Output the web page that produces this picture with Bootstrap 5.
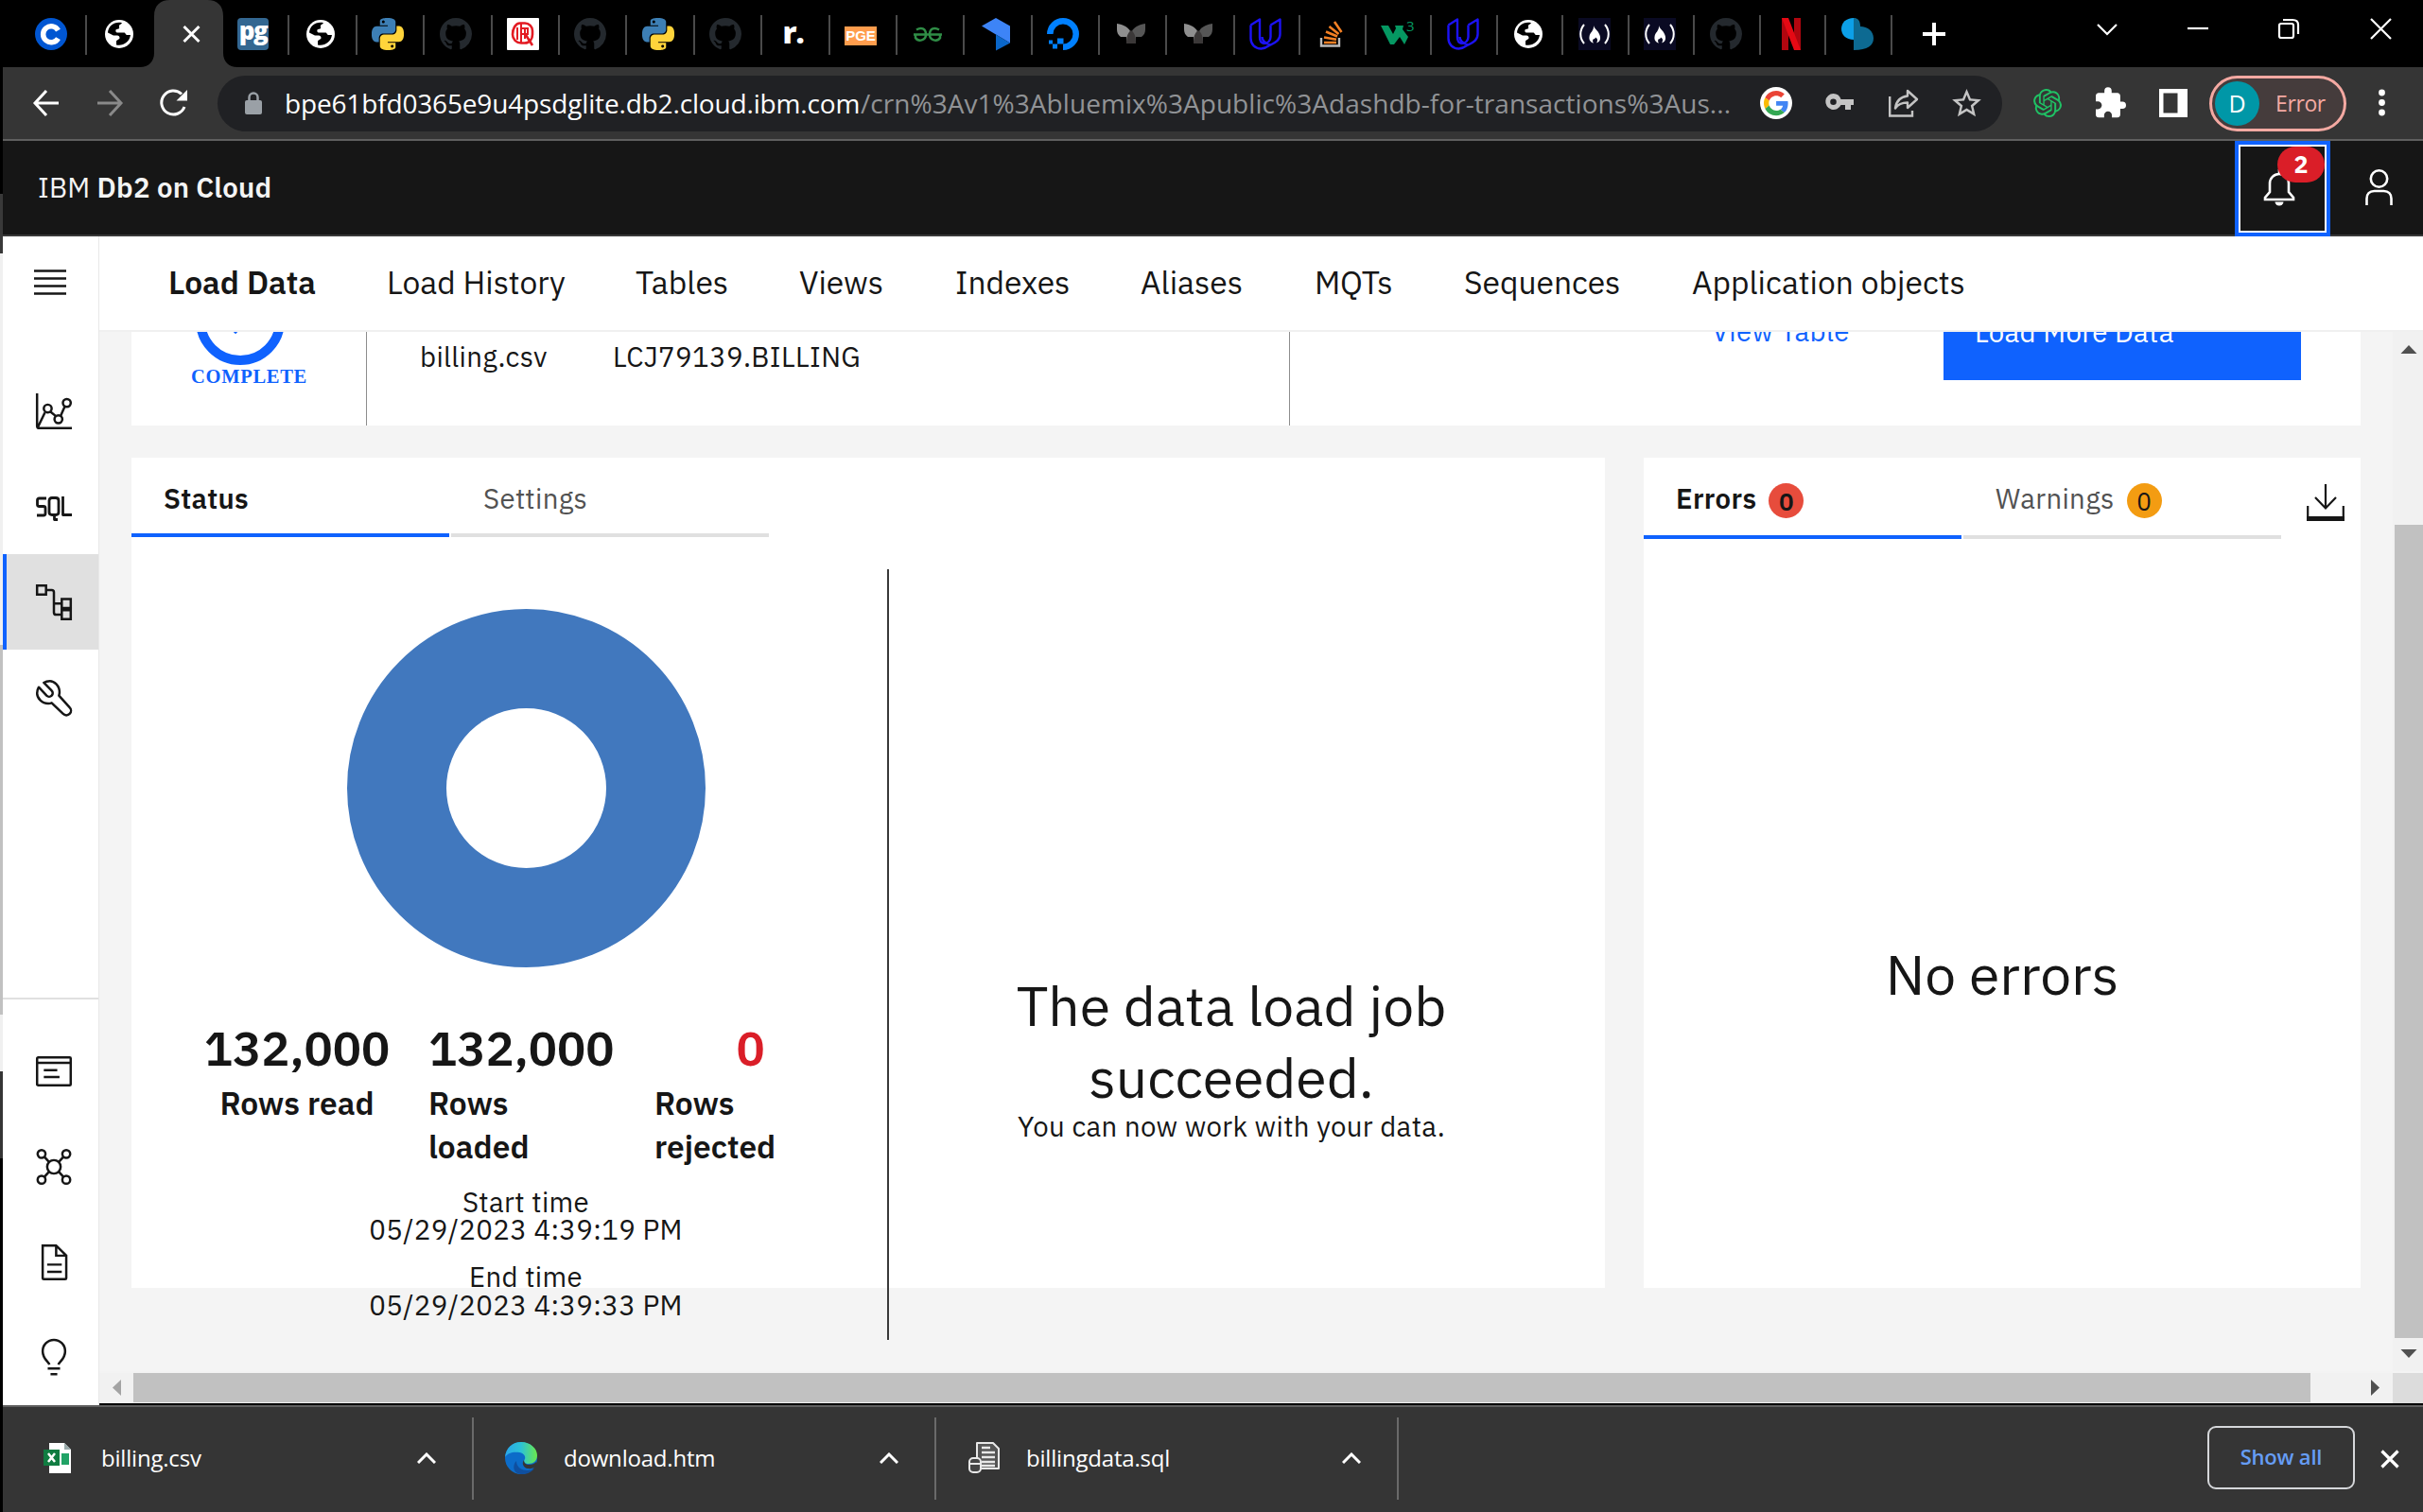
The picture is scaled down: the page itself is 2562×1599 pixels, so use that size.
<!DOCTYPE html>
<html lang="en">
<head>
<meta charset="utf-8">
<title>IBM Db2 on Cloud</title>
<link href="https://cdn.jsdelivr.net/npm/bootstrap@5.3.0/dist/css/bootstrap.min.css" rel="stylesheet">
<style>
html,body{width:2562px;height:1599px;overflow:hidden;margin:0}
body{background:#000;color:#161616;font-family:"IBM Plex Sans",Roboto,"Liberation Sans",sans-serif;line-height:1}
svg{display:block;flex:none;overflow:visible}
.t{white-space:nowrap}
.desk-edge{width:3px;flex:none;background:linear-gradient(#000 0 205px,#393939 205px 268px,#f0f0f0 268px 682px,#c1c1c1 682px 1073px,#f0f0f0 1073px 1133px,#353535 1133px 1225px,#000 1225px)}
.win{width:2559px;flex:none}
.chrome{font-family:"Segoe UI","Open Sans","Noto Sans",sans-serif;color:#fff}
.strip{height:71px;background:#000}
.tb{width:71.4px;height:42px;margin-top:16px;padding-right:4.4px;padding-bottom:2px;border-right:2px solid #4a4a4a;flex:none;display:flex;align-items:center;justify-content:center}
.tb.first{width:89px;padding-left:14px;padding-right:0}
.tb.second{padding-right:4px;padding-left:0;border:0;width:71px}
.tb.tight{width:69.5px;padding-right:2.5px}
.tb-on{width:72px;height:71px;flex:none}
.tb-on .shape{position:absolute;left:-15px;top:0}
.wctl{margin-left:157px;width:346px;padding-top:19px}
.fav-pge{width:34px;height:20px;background:#ff9d4d;font:700 15px/20px "Liberation Sans",sans-serif;text-align:center;margin-top:3px}
.fav-pg{width:33px;height:34px;background:#336791;border-radius:4px;font:800 26px/27px "Open Sans",sans-serif;text-align:center;letter-spacing:-1.5px}
.fav-q{width:34px;height:34px;background:#fff;color:#e31b23;border-radius:1px}
.fav-c{width:34px;height:34px;border-radius:50%;background:#0056d2}
.fav-r{font:800 32px/34px "Open Sans",sans-serif;letter-spacing:-1px;padding-bottom:4px}
.tools{height:78px;background:#353535;border-bottom:2px solid #5f5f5f;padding-left:32px}
.omni{width:1887px;height:59px;border-radius:30px;background:#202124;margin-left:31px;padding-left:29px}
.url{font-size:28px;margin-left:24px;width:1529px;line-height:56px}
.url .host{display:inline-block;width:609px;letter-spacing:-.16px}
.url .path{color:#919396;letter-spacing:.05px}
.chip{width:145px;height:59px;border:3px solid #f4a9a2;border-radius:30px;background:#453c3c;color:#f4a9a2;padding-left:3px}
.chip .err{font-size:23px;letter-spacing:-.4px;margin-left:17px}
.ava{width:47px;height:47px;border-radius:50%;background:#0097a7;font-size:25px;color:#fff;line-height:47px;text-align:center}
.ibm{height:101px;background:#161616;border-bottom:2px solid #393939;color:#f4f4f4;font-size:29.4px;padding-left:37px;letter-spacing:.21px}
.ibm b,.topnav b{font-weight:600}
.bell{width:101px;height:101px;border:4px solid #0f62fe;box-shadow:inset 0 0 0 2px #fff;margin-bottom:-2px;background:#161616}
.bell .cnt{position:absolute;left:41px;top:2px;width:50px;height:38px;border-radius:19px;background:#da1e28;color:#fff;font-size:25px;font-weight:700;line-height:38px;text-align:center;letter-spacing:0}
.side{width:102px;border-right:1px solid #e8e8e8;background:#fff;flex:none}
.sd{height:101px;flex:none;display:flex;align-items:center;padding-left:35px;width:101px}
.sd.on{background:#e0e0e0;border-left:4px solid #0f62fe;padding-left:31px}
.sd svg{fill:none;stroke:#161616;stroke-width:2.1}
.topnav{height:101px;background:#fff;border-bottom:2px solid #f0f0f0;font-size:33.6px;padding-left:73px;line-height:97px}
.topnav span{flex:none;margin-right:76px}
.topnav span:nth-child(1){width:153px;margin-right:78px}
.topnav span:nth-child(2){width:187px}
.topnav span:nth-child(3){width:97px}
.topnav span:nth-child(4){width:89px}
.topnav span:nth-child(5){width:120px}
.topnav span:nth-child(6){width:108px}
.topnav span:nth-child(7){width:82px;letter-spacing:-.3px}
.topnav span:nth-child(8){width:165px}
.view{height:1099px;background:#f4f4f4}
.pane{width:2425px;flex:none;overflow:hidden;padding-left:34px}
.sum{width:2357px;height:199px;margin-top:-100px;background:#fff;margin-bottom:34px;font-size:29.4px;letter-spacing:.34px}
.sum .c1{width:249px;border-right:1px solid #8d8d8d;padding-top:41px}
.sum .c2{width:976px;border-right:1px solid #8d8d8d;padding:112px 0 0 56px;line-height:28px}
.fname{width:204px}
.done{font:700 20.5px/22px "Liberation Serif",serif;color:#0f62fe;margin:1px 0 0 63px;letter-spacing:.71px}
.vt{width:242px;margin-left:446px;margin-right:3px;line-height:99px;color:#0f62fe}
.more{width:378px;height:101px;background:#0f62fe;color:#fff;border-radius:0;border:0;font-size:29.4px;text-align:left;padding:0 0 0 33px;line-height:101px;letter-spacing:.34px}
.lc{width:1558px;height:878px;background:#fff}
.rc{width:758px;height:878px;background:#fff}
.tabx{width:336px;font-size:29.4px;line-height:87px;padding-left:34px;height:84px;border-bottom:4px solid #e0e0e0;color:#525252;margin-right:2px;letter-spacing:.34px}
.tabx.on{border-color:#0f62fe;color:#161616;font-weight:600}
.rc .tabx{height:86px}
.num{width:37px;height:37px;border-radius:50%;color:#161616;line-height:38px;text-align:center;font-size:26px;display:inline-block;letter-spacing:0;margin-left:13px;position:relative;top:2px}
.num.er{background:#e74c3c}
.num.wa{background:#f39c12}
.stat{width:768px;height:815px;margin:34px 0 0 33px;border-right:2px solid #393939;padding:42px 0 0 2px}
.stats{margin-top:52px;padding-left:40px}
.stats>div{width:200px}
.big{font-size:50.4px;font-weight:600;line-height:66px;margin-bottom:3px}
.big.rej{color:#da1e28;padding-left:3px}
.lbl{font-size:33.6px;font-weight:600;line-height:46px}
.tm{font-size:29.4px;line-height:29.4px;text-align:center;margin-bottom:20.5px;letter-spacing:.34px}
.msg{padding-top:457px;padding-right:33px;text-align:center;flex:1}
.h{font-size:58.8px;line-height:76px}
.none{padding-top:422px}
.sub{font-size:29.4px;line-height:29px;letter-spacing:.34px}
.vb{width:32px;background:#f1f1f1}
.vb .th{background:#c1c1c1;height:860px;margin:0 0 0 2px}
.hb{height:34px;background:#f1f1f1;border-top:2px solid #f3f3f3}
.hb .th{background:#c1c1c1;width:2302px;height:31px}
.dl{height:114px;background:#353535;border-top:2px solid #5f5f5f;font-size:24px;letter-spacing:-.2px;padding-bottom:2px}
.di{height:87px;border-right:2px solid #6a6a6a;padding-bottom:2px}
.all{width:156px;height:67px;border:2px solid #d5d7da;border-radius:9px;color:#669df6;font-size:22px;font-weight:600;line-height:60px;text-align:center;padding:0;margin-bottom:2px}
</style>
</head>
<body class="d-flex">
<svg width="0" height="0" style="position:absolute">
<defs>
<symbol id="gh" viewBox="0 0 16 16"><path fill="#24292e" d="M8 0C3.58 0 0 3.58 0 8c0 3.54 2.29 6.53 5.47 7.59.4.07.55-.17.55-.38 0-.19-.01-.82-.01-1.49-2.01.37-2.53-.49-2.69-.94-.09-.23-.48-.94-.82-1.13-.28-.15-.68-.52-.01-.53.63-.01 1.08.58 1.23.82.72 1.21 1.87.87 2.33.66.07-.52.28-.87.51-1.07-1.78-.2-3.64-.89-3.64-3.95 0-.87.31-1.59.82-2.15-.08-.2-.36-1.02.08-2.12 0 0 .67-.21 2.2.82.64-.18 1.32-.27 2-.27.68 0 1.36.09 2 .27 1.53-1.04 2.2-.82 2.2-.82.44 1.1.16 1.92.08 2.12.51.56.82 1.27.82 2.15 0 3.07-1.87 3.75-3.65 3.95.29.25.54.73.54 1.48 0 1.07-.01 1.93-.01 2.2 0 .21.15.46.55.38A8.012 8.012 0 0 0 16 8c0-4.42-3.58-8-8-8z"/></symbol>
<symbol id="globe" viewBox="0 0 30 30"><circle cx="15" cy="15" r="15" fill="#fff"/><path fill="#000" d="M18 3.2C10 1.500 3.500 6.500 3 13.500L9 16.500h4c1.500 0 2.500 1 2.500 2.500 0 2-3.500 2-3.500 4v3.500c7 1.500 14-3 15-10.500h-3.500c-2 0-1.500-2.500-3.500-2.500h-7c-1.500 0-2-1.500-1.500-3 .5-1.200 3-.5 3.500-1.500.6-1-.5-1.500 0-3 .5-1.300 2-1.300 3-2.800z"/></symbol>
<symbol id="pyh" viewBox="0 0 24 24"><path d="M14.25.18l.9.2.73.26.59.3.45.32.34.34.25.34.16.33.1.3.04.26.02.2-.01.13V8.5l-.05.63-.13.55-.21.46-.26.38-.3.31-.33.25-.35.19-.35.14-.33.1-.3.07-.26.04-.21.02H8.77l-.69.05-.59.14-.5.22-.41.27-.33.32-.27.35-.2.36-.15.37-.1.35-.07.32-.04.27-.02.21v3.06H3.17l-.21-.03-.28-.07-.32-.12-.35-.18-.36-.26-.36-.36-.35-.46-.32-.59-.28-.73-.21-.88-.14-1.05-.05-1.23.06-1.22.16-1.04.24-.87.32-.71.36-.57.4-.44.42-.33.42-.24.4-.16.36-.1.32-.05.24-.01h.16l.06.01h8.16v-.83H6.18l-.01-2.75-.02-.37.05-.34.11-.31.17-.28.25-.26.31-.23.38-.2.44-.18.51-.15.58-.12.64-.1.71-.06.77-.04.84-.02 1.27.05zm-6.3 1.98l-.23.33-.08.41.08.41.23.34.33.22.41.09.41-.09.33-.22.23-.34.08-.41-.08-.41-.23-.33-.33-.22-.41-.09-.41.09z"/></symbol>
<symbol id="py" viewBox="0 0 24 24"><use href="#pyh" fill="#3d7fb5" width="24" height="24"/><use href="#pyh" fill="#ffd43b" width="24" height="24" transform="rotate(180 12 12)"/></symbol>
<symbol id="mm" viewBox="0 0 30 22"><path fill="#8f8f8f" d="M0 0c8 1 13 5 14 8L10 21V14H4C1 12 0 9 0 6z"/><path fill="#565656" d="M30 0c-8 1-13 5-14 8l4 13v-7h6c3-2 4-5 4-8z"/><path fill="#3b3838" d="M15 7c4 3 5 7 5 14H10c0-7 1-11 5-14z"/></symbol>
<symbol id="ud" viewBox="0 0 34 34"><path fill="none" stroke="#1c12f5" stroke-width="2.400" stroke-linejoin="round" d="M1.500 7.500L11 1.500v19c0 4 2 6 4.500 6.500M1.500 7.500v14C1.500 28 6 32.500 12.500 32.500c5 0 7-2.500 10-4.500M22.500 7.500L32.500 1.500V17c0 6-4 8.500-10 11.500C17 27 13.500 25 13.500 20M22.500 7.500V20c0 4-3 7-7 7"/></symbol>
<symbol id="fcc" viewBox="0 0 34 34"><path fill="#0a0a23" d="M0 0h34v34H0z"/><path fill="none" stroke="#fff" stroke-width="2" d="M6 7c-5 6-5 14 0 20M28 7c5 6 5 14 0 20"/><path fill="#fff" d="M16 8c1 4 6 6 7 12 .5 4-1.500 5.500-4 6.500 2-3 1-5-1-6-.5 1.500-1 2-2 1.500-1.500 1.500-1 3.500 0 4.500-3-.8-5-3-4.500-6.500C12 15 16.500 14 16 8z"/></symbol>
<symbol id="up" viewBox="0 0 20 12"><path fill="none" stroke="#fff" stroke-width="3" d="M1 11L10 2l9 9"/></symbol>
</defs>
</svg>
<div class="desk-edge"></div>
<div class="win d-flex flex-column">
<div class="chrome">
<div class="strip d-flex">
<div class="tb first"><div class="fav-c"><svg width="34" height="34"><path d="M24.500 13A8.500 8.500 0 1 0 24.500 21.500" fill="none" stroke="#fff" stroke-width="5.500"/></svg></div></div>
<div class="tb second"><svg width="30" height="30"><use href="#globe"/></svg></div>
<div class="tb-on position-relative"><svg class="shape" width="103" height="71"><path fill="#353535" d="M0 71c9 0 15-6 15-15V17C15 6 21 0 32 0h39c11 0 17 6 17 17v39c0 9 6 15 15 15z"/><path d="M46.500 28l16 16M62.500 28l-16 16" stroke="#fff" stroke-width="3"/></svg></div>
<div class="tb"><div class="fav-pg">pg</div></div>
<div class="tb"><svg width="30" height="30"><use href="#globe"/></svg></div>
<div class="tb"><svg width="34" height="34"><use href="#py"/></svg></div>
<div class="tb"><svg width="34" height="34"><use href="#gh"/></svg></div>
<div class="tb"><div class="fav-q"><svg width="34" height="34" fill="none" stroke="#e31b23"><path stroke-width="2.600" d="M14 5.500h5a8 8 0 0 1 8 8v4c0 5-3 9-8 9h-4c-5 0-9-4-9-9 0-6 3-12 8-12zM20 18l7 11"/><path stroke-width="2" d="M11 10v13M15 6v20M19 10v12M15 11h7v6h-7"/></svg></div></div>
<div class="tb"><svg width="34" height="34"><use href="#gh"/></svg></div>
<div class="tb"><svg width="34" height="34"><use href="#py"/></svg></div>
<div class="tb"><svg width="34" height="34"><use href="#gh"/></svg></div>
<div class="tb"><div class="fav-r">r.</div></div>
<div class="tb"><div class="fav-pge">PGE</div></div>
<div class="tb"><svg width="30" height="15" fill="none" stroke="#2f8d46" stroke-width="2.500"><path d="M0 7.500h30M3 2.500C8-.5 13 1 13 7.500c0 6.500-8 8-11 3.500V7.500M27 2.500C22-.5 17 1 17 7.500c0 6.500 8 8 11 3.500V7.500"/></svg></div>
<div class="tb"><svg width="30" height="34"><path fill="#3d84f7" d="M15 0l15 8.500v18L0 8.500z"/><path fill="#0a66c9" d="M15 17.500l15 9-15 8z"/></svg></div>
<div class="tb"><svg width="34" height="34"><path fill="none" stroke="#0080ff" stroke-width="6.500" d="M3.300 17A13.700 13.700 0 1 1 17 30.700"/><path fill="#0080ff" d="M11 21.500h6.500v6H11zM6 27.500h5v5H6zM2 23.500h4v4H2z"/></svg></div>
<div class="tb"><svg width="30" height="22"><use href="#mm"/></svg></div>
<div class="tb"><svg width="30" height="22"><use href="#mm"/></svg></div>
<div class="tb tight"><svg width="34" height="34"><use href="#ud"/></svg></div>
<div class="tb tight"><svg width="24" height="28" fill="none" stroke="#f48024" stroke-width="2.600"><path stroke="#bcbbbb" stroke-width="2.400" d="M1 18v8.500h19V18"/><path d="M4 23h13M4 17.500l13 2.200M6 11.500l12 5M9.500 6l10 8M15 1l7.500 11"/></svg></div>
<div class="tb tight"><svg width="35" height="28"><path fill="#059862" d="M0 5h8l5 9 3-6-1-3h9l-1 4 6 8-4 8-5-8-6 8h-4z"/><text x="27" y="11" font-size="15" fill="#059862" font-family="Open Sans">3</text></svg></div>
<div class="tb tight"><svg width="34" height="34"><use href="#ud"/></svg></div>
<div class="tb tight"><svg width="30" height="30"><use href="#globe"/></svg></div>
<div class="tb tight"><svg width="34" height="34"><use href="#fcc"/></svg></div>
<div class="tb tight"><svg width="34" height="34"><use href="#fcc"/></svg></div>
<div class="tb tight"><svg width="34" height="34"><use href="#gh"/></svg></div>
<div class="tb tight"><svg width="20" height="34"><path fill="#b1060f" d="M0 0h7v34H0zM13 0h7v34h-7z"/><path fill="#e50914" d="M0 0h7l13 34h-7z"/></svg></div>
<div class="tb tight"><svg width="34" height="34"><path fill="#0ca0e8" d="M13 0v23C5 23 0 18 0 11.500S5 0 13 0z"/><path fill="#0d6a92" d="M13 0c4 0 7 2 7 9 8 0 14 5 14 12.500S28 34 13 34z"/></svg></div>
<svg class="ms-auto mt-3 pt-1" width="28" height="32"><path d="M14 4v24M2 16h24" stroke="#fff" stroke-width="4"/></svg>
<div class="wctl d-flex"><svg width="24" height="24"><path d="M2 7l10 10L22 7" fill="none" stroke="#fff" stroke-width="2.200"/></svg><svg width="22" height="24" style="margin-left:73px"><path d="M0 11h22" stroke="#fff" stroke-width="2.200"/></svg><svg width="24" height="24" style="margin-left:74px" fill="none" stroke="#fff" stroke-width="2.200"><path d="M5 2h10c4 0 6 2 6 5v10"/><rect x="1" y="6" width="15" height="15" rx="2"/></svg><svg width="24" height="24" style="margin-left:73px"><path d="M1 1l21 21M22 1L1 22" stroke="#fff" stroke-width="2.200"/></svg></div>
</div>
<div class="tools d-flex align-items-center">
<svg width="27" height="28" fill="none" stroke="#fff" stroke-width="3"><path d="M27 14H2M14 1L2 14l12 13"/></svg>
<svg width="27" height="28" style="margin-left:41px" fill="none" stroke="#8a8a8a" stroke-width="3"><path d="M0 14h25M13 1l12 13-12 13"/></svg>
<svg width="30" height="30" style="margin-left:39px" fill="none" stroke="#fff" stroke-width="3"><path d="M26 19A12.500 12.500 0 1 1 23 5.500"/><path fill="#fff" stroke="none" d="M29 1v11.500H17.500z"/></svg>
<div class="omni d-flex align-items-center">
<svg width="18" height="24"><rect y="9" width="18" height="15" rx="2" fill="#9aa0a6"/><path d="M4.500 10V6a4.500 4.500 0 0 1 9 0v4" fill="none" stroke="#9aa0a6" stroke-width="2.500"/></svg>
<div class="url t"><span class="host">bpe61bfd0365e9u4psdglite.db2.cloud.ibm.com</span><span class="path">/crn%3Av1%3Abluemix%3Apublic%3Adashdb-for-transactions%3Aus...</span></div>
<svg width="34" height="34" viewBox="0 0 34 34" style="margin-left:31px"><circle cx="17" cy="17" r="17" fill="#fff"/><g transform="translate(4 4) scale(.545)"><path fill="#EA4335" d="M24 9.500c3.540 0 6.710 1.220 9.210 3.600l6.850-6.850C35.900 2.380 30.470 0 24 0 14.620 0 6.510 5.380 2.560 13.220l7.980 6.190C12.430 13.720 17.740 9.500 24 9.500z"/><path fill="#4285F4" d="M46.980 24.550c0-1.570-.15-3.090-.38-4.550H24v9.020h12.940c-.58 2.960-2.260 5.480-4.780 7.180l7.730 6c4.510-4.180 7.090-10.360 7.090-17.650z"/><path fill="#FBBC05" d="M10.530 28.590c-.48-1.450-.76-2.990-.76-4.590s.27-3.140.76-4.590l-7.980-6.190C.92 16.460 0 20.120 0 24c0 3.880.92 7.540 2.560 10.780l7.970-6.190z"/><path fill="#34A853" d="M24 48c6.480 0 11.930-2.130 15.890-5.810l-7.730-6c-2.150 1.450-4.920 2.300-8.160 2.300-6.260 0-11.570-4.220-13.470-9.910l-7.980 6.190C6.510 42.620 14.620 48 24 48z"/></g></svg>
<svg width="30" height="18" style="margin-left:35px;margin-top:-3px"><path fill="#c4c4c4" fill-rule="evenodd" d="M8.500 0a8.500 8.500 0 0 1 8 6H30v6h-3v5h-6v-5h-4.500a8.500 8.500 0 1 1-8-12zm0 5.500a3.300 3.300 0 1 0 0 6.600 3.300 3.300 0 0 0 0-6.600z"/></svg>
<svg width="32" height="30" style="margin-left:37px" fill="none" stroke="#c4c4c4" stroke-width="2.400"><path d="M1.200 8v20.500H25V23"/><path stroke-linejoin="round" d="M20 2l10 9-10 9v-5.500c-6 0-10 1.500-13 6 1-8 5-12 13-13z"/></svg>
<svg width="31" height="30" viewBox="2 2 20 19.500" style="margin-left:35px"><path fill="#c4c4c4" d="M22 9.240l-7.190-.62L12 2 9.190 8.630 2 9.240l5.460 4.730L5.820 21 12 17.270 18.180 21l-1.630-7.030L22 9.240zM12 15.400l-3.760 2.270 1-4.280-3.320-2.880 4.380-.38L12 6.100l1.710 4.040 4.380.38-3.320 2.880 1 4.280L12 15.400z"/></svg>
</div>
<svg width="30" height="30" viewBox="0 0 24 24" style="margin-left:33px"><path fill="#1fc164" d="M22.2819 9.8211a5.9847 5.9847 0 0 0-.5157-4.9108 6.0462 6.0462 0 0 0-6.5098-2.9A6.0651 6.0651 0 0 0 4.9807 4.1818a5.9847 5.9847 0 0 0-3.9977 2.9 6.0462 6.0462 0 0 0 .7427 7.0966 5.98 5.98 0 0 0 .511 4.9107 6.051 6.051 0 0 0 6.5146 2.9001A5.9847 5.9847 0 0 0 13.2599 24a6.0557 6.0557 0 0 0 5.7718-4.2058 5.9894 5.9894 0 0 0 3.9977-2.9001 6.0557 6.0557 0 0 0-.7475-7.0729zm-9.022 12.6081a4.4755 4.4755 0 0 1-2.8764-1.0408l.1419-.0804 4.7783-2.7582a.7948.7948 0 0 0 .3927-.6813v-6.7369l2.02 1.1686a.071.071 0 0 1 .038.052v5.5826a4.504 4.504 0 0 1-4.4945 4.4944zm-9.6607-4.1254a4.4708 4.4708 0 0 1-.5346-3.0137l.142.0852 4.783 2.7582a.7712.7712 0 0 0 .7806 0l5.8428-3.3685v2.3324a.0804.0804 0 0 1-.0332.0615L9.74 19.9502a4.4992 4.4992 0 0 1-6.1408-1.6464zM2.3408 7.8956a4.485 4.485 0 0 1 2.3655-1.9728V11.6a.7664.7664 0 0 0 .3879.6765l5.8144 3.3543-2.0201 1.1685a.0757.0757 0 0 1-.071 0l-4.8303-2.7865A4.504 4.504 0 0 1 2.3408 7.872zm16.5963 3.8558L13.1038 8.364 15.1192 7.2a.0757.0757 0 0 1 .071 0l4.8303 2.7913a4.4944 4.4944 0 0 1-.6765 8.1042v-5.6772a.79.79 0 0 0-.407-.667zm2.0107-3.0231l-.142-.0852-4.7735-2.7818a.7759.7759 0 0 0-.7854 0L9.409 9.2297V6.8974a.0662.0662 0 0 1 .0284-.0615l4.8303-2.7866a4.4992 4.4992 0 0 1 6.6802 4.66zM8.3065 12.863l-2.02-1.1638a.0804.0804 0 0 1-.038-.0567V6.0742a4.4992 4.4992 0 0 1 7.3757-3.4537l-.142.0805L8.704 5.459a.7948.7948 0 0 0-.3927.6813zm1.0976-2.3654l2.602-1.4998 2.6069 1.4998v2.9994l-2.5974 1.4997-2.6067-1.4997Z"/></svg>
<svg width="32" height="32" viewBox="2 1.500 21 21" style="margin-left:36px"><path fill="#fff" d="M20.500 11H19V7c0-1.100-.9-2-2-2h-4V3.500a2.500 2.500 0 0 0-5 0V5H4c-1.100 0-1.990.9-1.990 2v3.800H3.500c1.490 0 2.700 1.210 2.700 2.700s-1.210 2.700-2.700 2.700H2V20c0 1.100.9 2 2 2h3.800v-1.500c0-1.490 1.210-2.700 2.700-2.700s2.700 1.210 2.700 2.700V22H17c1.100 0 2-.9 2-2v-4h1.500a2.500 2.500 0 0 0 0-5z"/></svg>
<svg width="30" height="30" style="margin-left:35px"><path fill="#fff" fill-rule="evenodd" d="M0 0h30v30H0zM4.500 4.500h15v21h-15z"/></svg>
<div class="chip d-flex align-items-center" style="margin-left:23px"><div class="ava">D</div><span class="t err">Error</span></div>
<svg width="7" height="30" style="margin-left:34px"><g fill="#fff"><circle cx="3.500" cy="4" r="3.400"/><circle cx="3.500" cy="14.500" r="3.400"/><circle cx="3.500" cy="25" r="3.400"/></g></svg>
</div>
</div>
<div class="ibm d-flex align-items-center">
<span class="t">IBM <b>Db2 on Cloud</b></span>
<div class="bell position-relative ms-auto"><svg width="34" height="40" style="margin:26px 0 0 26px" fill="none" stroke="#fff" stroke-width="2.600"><path d="M17 0v4M7 24V15a10 10 0 0 1 20 0v9l5 6v2H2v-2z"/><path stroke="none" fill="#fff" d="M12.500 34.500h9a4.500 4 0 0 1-9 0z"/></svg><span class="cnt">2</span></div>
<svg width="30" height="39" style="margin:0 31px 1px 37px" fill="none" stroke="#fff" stroke-width="2.600"><circle cx="14.500" cy="10" r="8.700"/><path d="M1.500 38V31c0-5 3-8 8-8h10c5 0 8 3 8 8v7"/></svg>
</div>
<div class="d-flex">
<div class="side d-flex flex-column">
<div class="sd" style="padding-left:33px;height:97px"><svg width="34" height="27" style="stroke-width:2.600"><path d="M0 1.500h34M0 9.500h34M0 17.500h34M0 25.500h34"/></svg></div>
<div class="sd" style="margin-top:37px"><svg width="38" height="38" viewBox="0 0 32 32"><path d="M1 0v29a2 2 0 0 0 2 2h29M1.500 30.500L8 17M12.500 16l5.500 4.500M22 20l4-9"/><circle cx="10.500" cy="13.500" r="3.500"/><circle cx="20" cy="23" r="3.500"/><circle cx="27.500" cy="8.500" r="3.500"/></svg></div>
<div class="sd pt-1"><svg width="38" height="26" stroke-linejoin="round"><path style="stroke-width:2.800" d="M11 2H3.500Q1.500 2 1.500 4v4.500q0 2 2 2H8q2 0 2 2V18q0 2-2 2H1M17 1.500h4q3 0 3 3v12q0 3-3 3h-4q-3 0-3-3v-12q0-3 3-3zM19.500 20v4.500H23M28.500 0v19.500H38"/></svg></div>
<div class="sd on"><svg width="38" height="38" viewBox="0 0 32 32"><path d="M1 1h8v8H1zM23 13h8v8h-8zM23 23h8v8h-8zM9 5h5q2 0 2 2v18q0 2 2 2h5M16 17h7"/></svg></div>
<div class="sd"><svg width="38" height="38" viewBox="0 0 32 32"><path stroke-linejoin="round" d="M12.500 1C16 1 21 5 21 11c0 1-.2 2-.5 3L30 24.500a4 4 0 0 1-5.800 5.800L14 20.500c-1 .4-2 .5-3 .5C5 21 1 16 1 12c0-2 .5-4 1.500-5.500l7 7.500a3 3 0 0 0 4.500-4.500L7 2.500C8.500 1.500 10.500 1 12.500 1z"/></svg></div>
<div style="height:269px;border-bottom:2px solid #e0e0e0"></div>
<div class="sd" style="margin-top:25px"><svg width="38" height="32" viewBox="0 0 32 27"><rect x="1" y="1" width="30" height="25" rx="1"/><path d="M1 6h30M7 12.500h12M7 18.500h14"/></svg></div>
<div class="sd"><svg width="38" height="38" viewBox="0 0 32 32"><circle cx="16" cy="16" r="6"/><circle cx="5" cy="4.500" r="3.500"/><circle cx="27" cy="4.500" r="3.500"/><circle cx="5" cy="27.500" r="3.500"/><circle cx="27" cy="27.500" r="3.500"/><path d="M7.500 7l4 4.500M24.500 7l-4 4.500M7.500 25l4-4.500M24.500 25l-4-4.500"/></svg></div>
<div class="sd"><svg width="38" height="38" viewBox="0 0 32 32"><path d="M6 1h12l9 9v20q0 1-1 1H7q-1 0-1-1V2zM18 1v9h9M10 18h13M10 24.500h13"/></svg></div>
<div class="sd"><svg width="38" height="38" viewBox="0 0 32 32"><path d="M12 22c-1-3-6-5-6-12a10 10 0 0 1 20 0c0 7-5 9-6 12M10.500 25.500h11M13 30.500h6"/></svg></div>
</div>
<div class="flex-grow-1" style="height:1234px">
<div class="topnav d-flex t">
<span><b>Load Data</b></span><span>Load History</span><span>Tables</span><span>Views</span><span>Indexes</span><span>Aliases</span><span>MQTs</span><span>Sequences</span><span>Application objects</span>
</div>
<div class="view d-flex">
<div class="pane">
<div class="sum d-flex">
<div class="c1"><svg width="94" height="94" style="margin-left:68px"><circle cx="47" cy="47" r="42" fill="none" stroke="#0f62fe" stroke-width="10"/><path d="M26 41l16 16 26-28" fill="none" stroke="#0f62fe" stroke-width="6"/></svg><div class="done t">COMPLETE</div></div>
<div class="c2 t d-flex"><div class="fname">billing.csv</div><div>LCJ79139.BILLING</div></div>
<div class="d-flex t" style="padding-top:50px"><div class="vt">View Table</div><button class="more btn">Load More Data</button></div>
</div>
<div class="d-flex" style="gap:41px">
<div class="lc">
<div class="d-flex t"><div class="tabx on">Status</div><div class="tabx">Settings</div></div>
<div class="d-flex">
<div class="stat flex-shrink-0"><svg class="mx-auto" width="379" height="379"><circle cx="189.500" cy="189.500" r="137" fill="none" stroke="#4178be" stroke-width="105"/></svg>
<div class="stats d-flex t"><div class="text-center"><div class="big">132,000</div><div class="lbl">Rows read</div></div>
<div style="margin-left:39px"><div class="big">132,000</div><div class="lbl">Rows<br>loaded</div></div>
<div style="margin-left:39px"><div class="big rej text-center">0</div><div class="lbl">Rows<br>rejected</div></div></div>
<div style="margin-top:21px"><div class="tm">Start time<br>05/29/2023 4:39:19 PM</div><div class="tm">End time<br>05/29/2023 4:39:33 PM</div></div>
</div>
<div class="msg"><div class="h">The data load job<br>succeeded.</div><div class="sub">You can now work with your data.</div></div>
</div>
</div>
<div class="rc">
<div class="d-flex t"><div class="tabx on">Errors<span class="num er">0</span></div><div class="tabx">Warnings<span class="num wa">0</span></div><svg width="40" height="39" style="margin:28px 0 0 25px" fill="none" stroke="#161616" stroke-width="2.200"><path d="M20 0v25M9 14l11 11.500L31 14M1.200 23v13M38.800 23v13"/><path stroke-width="5" d="M0 36.500h40"/></svg></div>
<div class="h none text-center">No errors</div>
</div>
</div>
</div>
<div class="vb d-flex flex-column"><svg width="32" height="204"><path fill="#505050" d="M8.500 23L17 14l8.500 9z"/></svg><div class="th"></div><svg width="32" height="35"><path fill="#505050" d="M8.500 12h17L17 21z"/></svg></div>
</div>
<div class="hb d-flex"><svg width="36" height="32"><path fill="#a3a3a3" d="M23 7v17L14 15.500z"/></svg><div class="th"></div><svg class="flex-grow-1" width="87" height="32"><path fill="#505050" d="M64 7v17L73 15.500z"/></svg><div style="width:32px;background:#dcdcdc"></div></div>
</div>
</div>
<div class="dl chrome d-flex align-items-center">
<div class="di d-flex align-items-center" style="width:498px;padding-left:43px"><svg width="29" height="32"><path fill="#fff" d="M6 0h16l7 7v25H6z"/><path fill="#9aa" d="M22 0l7 7h-7z"/><path fill="#21a366" d="M19 11h8v12h-8z"/><path fill="#107c41" d="M0 7h17v17H0z"/><path stroke="#fff" stroke-width="2.500" d="M5 11l7 9M12 11l-7 9"/></svg><span class="t" style="margin-left:32px">billing.csv</span><svg class="ms-auto" width="20" height="12" style="margin-right:38px"><use href="#up"/></svg></div>
<div class="di d-flex align-items-center" style="width:489px;padding-left:33px"><svg width="34" height="34" viewBox="0 0 34 34"><defs><linearGradient id="e1" x1="0" x2="1"><stop offset="0" stop-color="#2aa5e8"/><stop offset=".5" stop-color="#2cc3d6"/><stop offset="1" stop-color="#6be84b"/></linearGradient></defs><circle cx="17" cy="17" r="17" fill="#0c6cc9"/><path fill="url(#e1)" d="M0 16C1 6 8 0 17 0c10 0 17 7 17 14 0 6-4 9-9 9-4 0-6-2-4.500-4 2-3 0-7-5-8C9 10 3 11 0 16z"/><path fill="#0f4f9f" d="M12 20c0 7 6 10 12 10 3 0 5-1 7-2-4 5-9 6-14 6-8 0-10-9-5-14z"/><path fill="#353535" d="M20 19c0 3 2 5 5.500 5 3 0 6-1 7.500-3v4c-3 3-6 3.500-9 3-4-.5-7-5-4-9z"/></svg><span class="t" style="margin-left:28px">download.htm</span><svg class="ms-auto" width="20" height="12" style="margin-right:38px"><use href="#up"/></svg></div>
<div class="di d-flex align-items-center" style="width:489px;padding-left:34px"><svg width="33" height="33" fill="none" stroke="#e8e8e8" stroke-width="2"><path fill="#555" stroke-linejoin="round" d="M9 1h17l6 6v21H9z"/><path stroke-width="2.400" d="M14 6h9M14 11h14M14 16h14M14 21h14M14 25h14"/><rect fill="#444" x="1" y="17" width="12" height="15" rx="4"/><path d="M1 23h12"/></svg><span class="t" style="margin-left:28px">billingdata.sql</span><svg class="ms-auto" width="20" height="12" style="margin-right:38px"><use href="#up"/></svg></div>
<div class="all ms-auto t">Show all</div>
<svg width="20" height="20" style="margin:0 25px 0 27px"><path d="M1.500 1.500l17 17M18.500 1.500l-17 17" stroke="#fff" stroke-width="3.200"/></svg>
</div>
</div>
<script src="https://cdn.jsdelivr.net/npm/bootstrap@5.3.0/dist/js/bootstrap.bundle.min.js"></script>
</body>
</html>
